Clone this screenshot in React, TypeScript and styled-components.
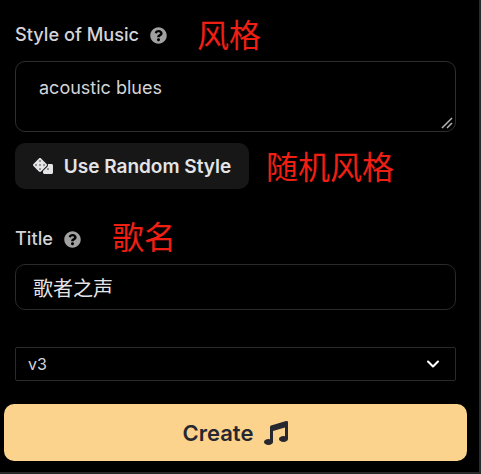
import styled, { createGlobalStyle } from "styled-components";
import { FaDice, FaMusic, FaQuestionCircle } from "react-icons/fa";
import { LuChevronDown } from "react-icons/lu";

const GlobalStyle = createGlobalStyle`
  html, body {
    margin: 0;
    padding: 0;
    height: 100%;
    background: #2a2a2c;
    overflow: hidden;
  }
`;

const Page = styled.div`
  width: 479px;
  height: 472px;
  background: #000;
  box-sizing: border-box;
  padding: 16px 23px 0 15px;
  display: flex;
  flex-direction: column;
  font-family: Inter, "Noto Sans CJK SC", sans-serif;
  color: #e4e4e7;
`;

const LabelRow = styled.div`
  display: flex;
  align-items: center;
  height: 36px;
`;

const Label = styled.span`
  font-size: 18.2px;
  font-weight: 500;
  color: #d4d4d8;
`;

const Help = styled(FaQuestionCircle)`
  width: 17px;
  height: 17px;
  margin: 2px 0 0 11px;
  color: #a1a1a1;
`;

const Note = styled.span<{ $gap: number; $lift?: number }>`
  margin-left: ${(p) => p.$gap}px;
  margin-bottom: ${(p) => (p.$lift ?? 0) * 2}px;
  font-family: "Noto Sans CJK SC", sans-serif;
  font-size: 32px;
  line-height: 36px;
  color: #ef1f14;
`;

const StyleBox = styled.div`
  position: relative;
  height: 71px;
  margin-top: 9px;
  box-sizing: border-box;
  padding: 15px 23px;
  border: 1px solid #2e2e2e;
  border-radius: 10px;
  font-size: 18px;
  color: #d4d4d8;
`;

const Grip = styled.svg`
  position: absolute;
  right: 2px;
  bottom: 2px;
  width: 12px;
  height: 12px;
`;

const RandomRow = styled.div`
  display: flex;
  align-items: center;
  margin-top: 11px;
`;

const RandomButton = styled.button`
  width: 234px;
  height: 46px;
  display: flex;
  align-items: center;
  justify-content: center;
  gap: 11px;
  padding: 0;
  border: none;
  border-radius: 10px;
  background: #171717;
  color: #e4e4e7;
  font: 600 19px Inter, sans-serif;
`;

const TitleRow = styled(LabelRow)`
  margin-top: 31px;
`;

const TitleBox = styled.div`
  height: 46px;
  margin-top: 8px;
  box-sizing: border-box;
  display: flex;
  align-items: center;
  padding: 0 17px;
  border: 1px solid #2a2a2a;
  border-radius: 10px;
  font-family: "Noto Sans CJK SC", sans-serif;
  font-size: 20px;
  color: #e4e4e7;
`;

const VersionSelect = styled.div`
  height: 34px;
  margin-top: 37px;
  box-sizing: border-box;
  display: flex;
  align-items: center;
  justify-content: space-between;
  padding: 0 12px;
  border: 1px solid #2a2a2a;
  border-radius: 2px;
  font-size: 16px;
  color: #d4d4d8;
`;

const CreateButton = styled.button`
  width: 463px;
  height: 57px;
  margin: 23px 0 0 -11px;
  display: flex;
  align-items: center;
  justify-content: center;
  gap: 11px;
  padding: 0;
  border: none;
  border-radius: 10px;
  background: #fbd38d;
  color: #27272f;
  font: 600 22px Inter, sans-serif;
`;

export default function App() {
  return (
    <>
      <GlobalStyle />
      <Page>
        <LabelRow>
          <Label>Style of Music</Label>
          <Help />
          <Note $gap={30} $lift={1}>风格</Note>
        </LabelRow>
        <StyleBox>
          acoustic blues
          <Grip viewBox="0 0 12 12">
            <path d="M1 11 L11 1 M6 11 L11 6" stroke="#b5b5b5" strokeWidth="1.5" />
          </Grip>
        </StyleBox>
        <RandomRow>
          <RandomButton>
            <FaDice size={20} />
            Use Random Style
          </RandomButton>
          <Note $gap={17} $lift={1}>随机风格</Note>
        </RandomRow>
        <TitleRow>
          <Label>Title</Label>
          <Help />
          <Note $gap={31} $lift={3}>歌名</Note>
        </TitleRow>
        <TitleBox>歌者之声</TitleBox>
        <VersionSelect>
          v3
          <LuChevronDown size={20} color="#fff" strokeWidth={2.5} />
        </VersionSelect>
        <CreateButton>
          Create
          <FaMusic size={24} />
        </CreateButton>
      </Page>
    </>
  );
}
